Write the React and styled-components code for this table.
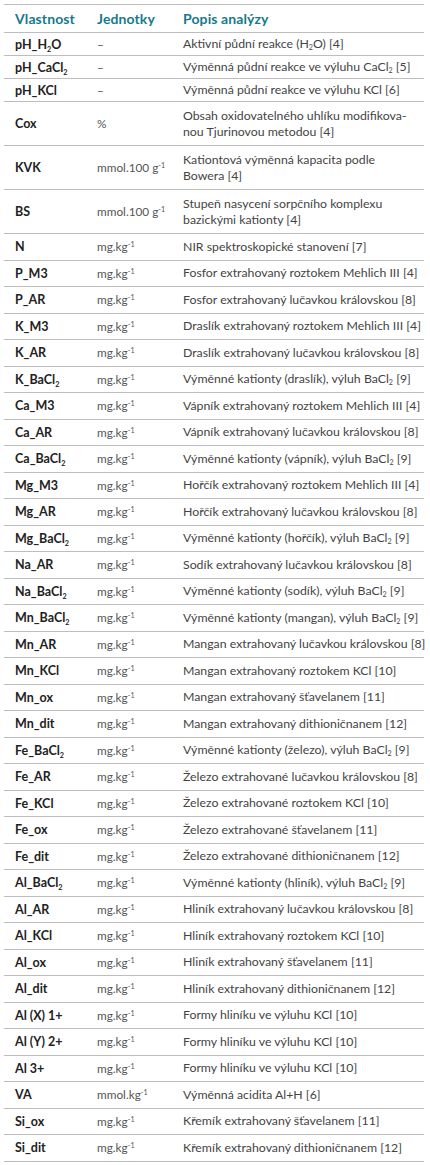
import React from "react"
import styled, {createGlobalStyle} from "styled-components"

const GlobalStyle = createGlobalStyle`
  html, body {
    margin: 0;
    padding: 0;
    background: #fff;
  }
  body {
    font-family: Lato, "Open Sans", sans-serif;
    -webkit-font-smoothing: antialiased;
  }
`

const Table = styled.div`
  width: 420px;
  margin: 4px 0 0 4px;
  border-top: 1px solid #bdbdbd;
`

const Row = styled.div`
  display: grid;
  grid-template-columns: 93px 86px 1fr;
  align-items: center;
  height: ${props => props.h}px;
  border-bottom: 1px solid #bdbdbd;
  box-sizing: border-box;
`

const HeadCell = styled.div`
  font-weight: 700;
  font-size: 14px;
  color: #17798c;
  padding-left: ${props => (props.first ? 11 : 0)}px;
  letter-spacing: 0.1px;
`

const Name = styled.div`
  padding-left: 11px;
  font-weight: 700;
  font-size: 12.5px;
  color: #222;
  white-space: nowrap;
`

const Unit = styled.div`
  font-size: 11.8px;
  color: #555;
  white-space: nowrap;
`

const Desc = styled.div`
  font-size: 12.3px;
  line-height: 16px;
  color: #444;
  white-space: nowrap;
`

const Sub = styled.sub`
  font-size: 0.58em;
  vertical-align: -0.35em;
  line-height: 0;
`

const Sup = styled.sup`
  font-size: 0.6em;
  vertical-align: 0.55em;
  line-height: 0;
`

const Cl2 = () => (
  <>
    Cl<Sub>2</Sub>
  </>
)

const MGKG = (
  <>
    mg.kg<Sup>-1</Sup>
  </>
)
const MMOL100 = (
  <>
    mmol.100 g<Sup>-1</Sup>
  </>
)
const MMOLKG = (
  <>
    mmol.kg<Sup>-1</Sup>
  </>
)

const bacl = (el, what) => ({
  name: (
    <>
      {el}_Ba<Cl2 />
    </>
  ),
  unit: MGKG,
  desc: (
    <>
      Výměnné kationty ({what}), výluh Ba<Cl2 /> [9]
    </>
  )
})

const s = (name, desc) => ({name, unit: MGKG, desc})

const rows = [
  {
    h: 23,
    name: (
      <>
        pH_H<Sub>2</Sub>O
      </>
    ),
    unit: "–",
    desc: (
      <>
        Aktivní půdní reakce (H<Sub>2</Sub>O) [4]
      </>
    )
  },
  {
    h: 23,
    name: (
      <>
        pH_Ca<Cl2 />
      </>
    ),
    unit: "–",
    desc: (
      <>
        Výměnná půdní reakce ve výluhu Ca<Cl2 /> [5]
      </>
    )
  },
  {h: 23, name: "pH_KCl", unit: "–", desc: "Výměnná půdní reakce ve výluhu KCl [6]"},
  {
    h: 44,
    name: "Cox",
    unit: "%",
    desc: (
      <>
        Obsah oxidovatelného uhlíku modifikova-
        <br />
        nou Tjurinovou metodou [4]
      </>
    )
  },
  {
    h: 44,
    name: "KVK",
    unit: MMOL100,
    desc: (
      <>
        Kationtová výměnná kapacita podle
        <br />
        Bowera [4]
      </>
    )
  },
  {
    h: 44,
    name: "BS",
    unit: MMOL100,
    desc: (
      <>
        Stupeň nasycení sorpčního komplexu
        <br />
        bazickými kationty [4]
      </>
    )
  },
  s("N", "NIR spektroskopické stanovení [7]"),
  s("P_M3", "Fosfor extrahovaný roztokem Mehlich III [4]"),
  s("P_AR", "Fosfor extrahovaný lučavkou královskou [8]"),
  s("K_M3", "Draslík extrahovaný roztokem Mehlich III [4]"),
  s("K_AR", "Draslík extrahovaný lučavkou královskou [8]"),
  bacl("K", "draslík"),
  s("Ca_M3", "Vápník extrahovaný roztokem Mehlich III [4]"),
  s("Ca_AR", "Vápník extrahovaný lučavkou královskou [8]"),
  bacl("Ca", "vápník"),
  s("Mg_M3", "Hořčík extrahovaný roztokem Mehlich III [4]"),
  s("Mg_AR", "Hořčík extrahovaný lučavkou královskou [8]"),
  bacl("Mg", "hořčík"),
  s("Na_AR", "Sodík extrahovaný lučavkou královskou [8]"),
  bacl("Na", "sodík"),
  bacl("Mn", "mangan"),
  s("Mn_AR", "Mangan extrahovaný lučavkou královskou [8]"),
  s("Mn_KCl", "Mangan extrahovaný roztokem KCl [10]"),
  s("Mn_ox", "Mangan extrahovaný šťavelanem [11]"),
  s("Mn_dit", "Mangan extrahovaný dithioničnanem [12]"),
  bacl("Fe", "železo"),
  s("Fe_AR", "Železo extrahované lučavkou královskou [8]"),
  s("Fe_KCl", "Železo extrahované roztokem KCl [10]"),
  s("Fe_ox", "Železo extrahované šťavelanem [11]"),
  s("Fe_dit", "Železo extrahované dithioničnanem [12]"),
  bacl("Al", "hliník"),
  s("Al_AR", "Hliník extrahovaný lučavkou královskou [8]"),
  s("Al_KCl", "Hliník extrahovaný roztokem KCl [10]"),
  s("Al_ox", "Hliník extrahovaný šťavelanem [11]"),
  s("Al_dit", "Hliník extrahovaný dithioničnanem [12]"),
  s("Al (X) 1+", "Formy hliníku ve výluhu KCl [10]"),
  s("Al (Y) 2+", "Formy hliníku ve výluhu KCl [10]"),
  s("Al 3+", "Formy hliníku ve výluhu KCl [10]"),
  {name: "VA", unit: MMOLKG, desc: "Výměnná acidita Al+H [6]"},
  s("Si_ox", "Křemík extrahovaný šťavelanem [11]"),
  s("Si_dit", "Křemík extrahovaný dithioničnanem [12]")
]

export default function App() {
  return (
    <>
      <GlobalStyle />
      <Table>
        <Row h={28}>
          <HeadCell first>Vlastnost</HeadCell>
          <HeadCell>Jednotky</HeadCell>
          <HeadCell>Popis analýzy</HeadCell>
        </Row>
        {rows.map((r, i) => (
          <Row key={i} h={r.h || 26.5}>
            <Name>{r.name}</Name>
            <Unit>{r.unit}</Unit>
            <Desc>{r.desc}</Desc>
          </Row>
        ))}
      </Table>
    </>
  )
}
